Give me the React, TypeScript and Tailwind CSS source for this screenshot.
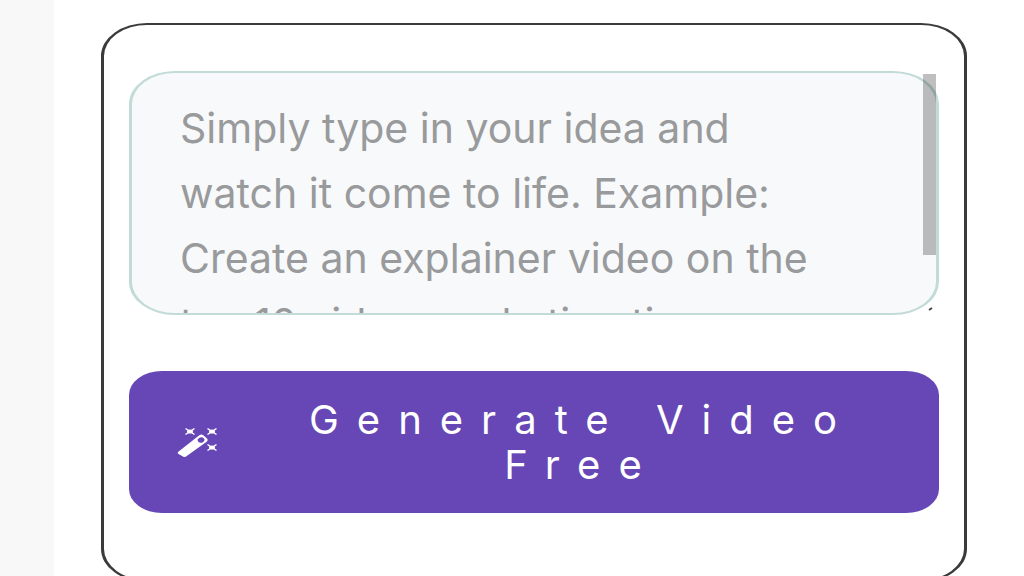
import React, { useState } from 'react';

const PLACEHOLDER =
  'Simply type in your idea and watch it come to life. Example: Create an explainer video on the top 10 video marketing tips';

function WandIcon() {
  return (
    <svg className="w-10 h-8 shrink-0" viewBox="0 0 40 32" fill="none" aria-hidden="true">
      {/* Wand */}
      <path d="M1 26 L22 9.500 Q24 8 26 9 L30 12.500 Q31.500 14 30 15.500 L9 30.500 Q7.500 31.500 6 30.500 L1.500 28 Q0 27 1 26 Z" fill="white" />
      <path d="M20.500 13.500 Q24 9.500 27 12.500 Q28.500 14.500 25.500 16.500 Q23 17.500 21 15.500 Z" fill="#6647b5" />
      {/* Sparkles */}
      <g stroke="white" strokeWidth="1.500">
        <path d="M8.500 2.500 L17.500 8.500 M17.500 2.500 L8.500 8.500" />
        <path d="M30.500 2.500 L39.500 8.500 M39.500 2.500 L30.500 8.500" />
        <path d="M30.500 18.500 L39.500 24.500 M39.500 18.500 L30.500 24.500" />
      </g>
      <g fill="white">
        <ellipse cx="13" cy="5.500" rx="3" ry="2" />
        <ellipse cx="35" cy="5.500" rx="3" ry="2" />
        <ellipse cx="35" cy="21.500" rx="3" ry="2" />
      </g>
    </svg>
  );
}

export default function App() {
  const [idea, setIdea] = useState('');

  return (
    <div className="flex h-screen overflow-hidden bg-white font-['Inter',sans-serif]">
      <aside className="w-[54px] shrink-0 bg-[#f8f8f8]" />

      <main className="flex-1 min-w-0 pt-[23px] pl-[47px] pr-[57px]">
        <form
          onSubmit={(e) => e.preventDefault()}
          className="flex flex-col gap-14 border-x-3 border-y-2 border-[#3a3a3c] rounded-[46px/33px] px-[25px] pt-[46px] pb-[67px]"
        >
          {/* Idea input */}
          <div className="relative flex">
            <textarea
              aria-label="Video idea"
              value={idea}
              onChange={(e) => setIdea(e.target.value)}
              placeholder={PLACEHOLDER}
              className="block w-full h-[244px] resize-none overflow-hidden border-x-3 border-y-2 border-[#c2dbd7] rounded-[46px/33px] bg-[#f7f9fb] pl-12 pr-28 pt-[23px] text-[41px] leading-[65px] text-[#444] placeholder:text-[#999a9c] outline-none"
            />
            <div className="absolute top-[3px] right-[3px] w-[13px] h-[181px] bg-black/25" />
            <svg className="absolute bottom-1 right-1 w-2 h-1" viewBox="0 0 8 4" aria-hidden="true">
              <path d="M2 3 L5 1" stroke="#444" strokeWidth="2" />
            </svg>
          </div>

          {/* Submit */}
          <button
            type="submit"
            className="flex items-center gap-14 px-12 py-[26px] rounded-[33px/24px] bg-[#6647b5] text-white"
          >
            <WandIcon />
            <span className="flex-1 text-center text-[40px] leading-[45px] tracking-[0.45em]">
              Generate Video Free
            </span>
          </button>
        </form>
      </main>
    </div>
  );
}
